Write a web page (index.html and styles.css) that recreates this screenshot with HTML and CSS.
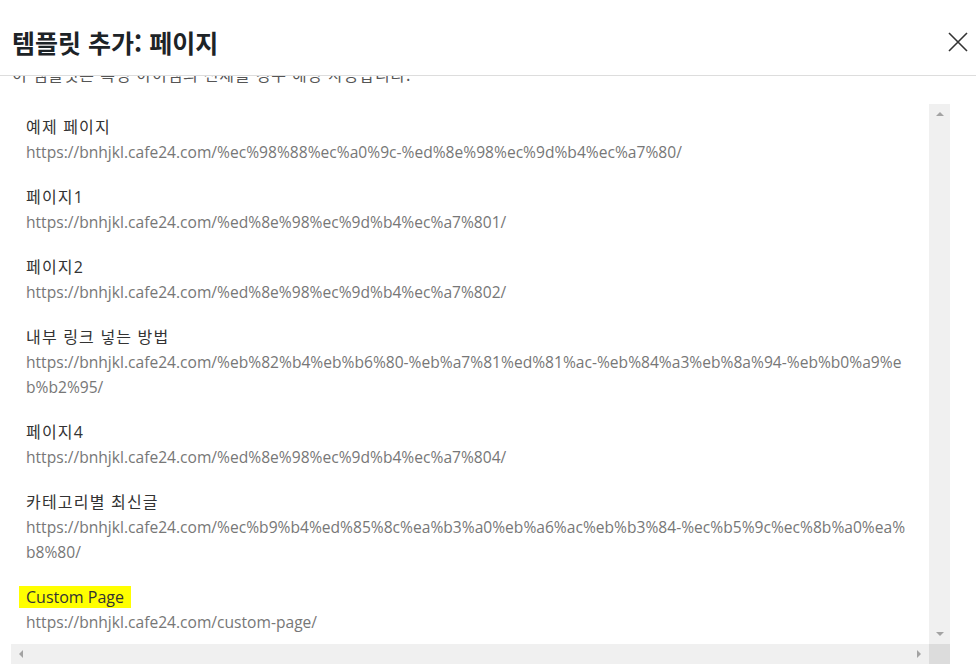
FILE: index.html
```html
<!DOCTYPE html>
<html lang="ko">
<head>
    <meta charset="UTF-8">
    <meta name="viewport" content="width=device-width, initial-scale=1.0">
    <title>템플릿 추가: 페이지</title>
    <link rel="stylesheet" href="styles.css">
</head>
<body>
    <div class="modal">
        <div class="modal-header">
            <h1 class="modal-title">템플릿 추가: 페이지</h1>
            <button class="modal-close" aria-label="닫기">
                <svg width="20" height="20" viewBox="0 0 20 20">
                    <path d="M1 1 L19 19 M19 1 L1 19" stroke="#333" stroke-width="1.6" fill="none"/>
                </svg>
            </button>
        </div>

        <div class="modal-body">
            <p class="intro">이 템플릿은 특정 아이템의 전체를 경우 해당 사용합니다.</p>

            <div class="list-box">
                <div class="list">
                    <div class="item">
                        <div class="item-title">예제 페이지</div>
                        <div class="item-url">https://bnhjkl.cafe24.com/%ec%98%88%ec%a0%9c-%ed%8e%98%ec%9d%b4%ec%a7%80/</div>
                    </div>
                    <div class="item">
                        <div class="item-title">페이지1</div>
                        <div class="item-url">https://bnhjkl.cafe24.com/%ed%8e%98%ec%9d%b4%ec%a7%801/</div>
                    </div>
                    <div class="item">
                        <div class="item-title">페이지2</div>
                        <div class="item-url">https://bnhjkl.cafe24.com/%ed%8e%98%ec%9d%b4%ec%a7%802/</div>
                    </div>
                    <div class="item">
                        <div class="item-title">내부 링크 넣는 방법</div>
                        <div class="item-url">https://bnhjkl.cafe24.com/%eb%82%b4%eb%b6%80-%eb%a7%81%ed%81%ac-%eb%84%a3%eb%8a%94-%eb%b0%a9%eb%b2%95/</div>
                    </div>
                    <div class="item">
                        <div class="item-title">페이지4</div>
                        <div class="item-url">https://bnhjkl.cafe24.com/%ed%8e%98%ec%9d%b4%ec%a7%804/</div>
                    </div>
                    <div class="item">
                        <div class="item-title">카테고리별 최신글</div>
                        <div class="item-url">https://bnhjkl.cafe24.com/%ec%b9%b4%ed%85%8c%ea%b3%a0%eb%a6%ac%eb%b3%84-%ec%b5%9c%ec%8b%a0%ea%b8%80/</div>
                    </div>
                    <div class="item">
                        <div class="item-title"><span class="highlight">Custom Page</span></div>
                        <div class="item-url">https://bnhjkl.cafe24.com/custom-page/</div>
                    </div>
                </div>

                <div class="scroll-v">
                    <span class="arrow arrow-up"></span>
                    <span class="arrow arrow-down"></span>
                </div>
                <div class="scroll-h">
                    <span class="arrow arrow-left"></span>
                    <span class="arrow arrow-right"></span>
                </div>
                <div class="scroll-corner"></div>
            </div>
        </div>
    </div>
</body>
</html>
```

FILE: styles.css
```css
html, body {
    margin: 0;
    height: 100%;
    overflow: hidden;
}

body {
    background: #fff;
    font-family: "Open Sans", "Noto Sans CJK KR", sans-serif;
    color: #333;
}

.modal {
    display: flex;
    flex-direction: column;
    height: 100%;
}

.modal-header {
    display: flex;
    align-items: center;
    justify-content: space-between;
    height: 75px;
    padding: 0 8px 0 12px;
    border-bottom: 1px solid #dddddd;
    flex-shrink: 0;
}

.modal-title {
    margin: 0;
    font-family: "Noto Sans CJK KR", sans-serif;
    font-size: 25px;
    font-weight: 700;
    color: #1d2327;
    padding-top: 8px;
}

.modal-close {
    background: none;
    border: 0;
    padding: 0;
    margin-top: 8px;
    width: 20px;
    height: 20px;
    cursor: pointer;
}

.modal-body {
    flex: 1;
    overflow: hidden;
    padding: 0 26px 0 11px;
}

.intro {
    margin: -12px 0 0 1px;
    font-family: "Noto Sans CJK KR", sans-serif;
    font-size: 16px;
    letter-spacing: 0.8px;
    line-height: 20px;
    color: #555;
}

.list-box {
    display: grid;
    grid-template-columns: 1fr 21px;
    grid-template-rows: 540px 20px;
    margin-top: 20px;
}

.list {
    padding: 11px 20px 0 15px;
    overflow: hidden;
}

.item {
    margin-bottom: 20px;
}

.item-title {
    font-size: 16px;
    letter-spacing: 1.2px;
    line-height: 25px;
    color: #333;
}

.highlight {
    background: #ffff00;
    padding: 0 7px;
    margin-left: -7px;
    letter-spacing: normal;
}

.item-url {
    font-size: 15.6px;
    line-height: 25px;
    color: #777;
    word-break: break-all;
}

.scroll-v {
    background: #f0f0f0;
    display: flex;
    flex-direction: column;
    justify-content: space-between;
    align-items: center;
    padding: 8px 0;
}

.scroll-h {
    background: #f0f0f0;
    display: flex;
    justify-content: space-between;
    align-items: center;
    padding: 0 8px;
}

.scroll-corner {
    background: #dcdcdc;
}

.arrow {
    width: 0;
    height: 0;
    border: 4px solid transparent;
}

.arrow-up {
    border-bottom: 4px solid #a3a3a3;
    border-top: 0;
}

.arrow-down {
    border-top: 4px solid #a3a3a3;
    border-bottom: 0;
}

.arrow-left {
    border-right: 4px solid #a3a3a3;
    border-left: 0;
}

.arrow-right {
    border-left: 4px solid #a3a3a3;
    border-right: 0;
}
```
